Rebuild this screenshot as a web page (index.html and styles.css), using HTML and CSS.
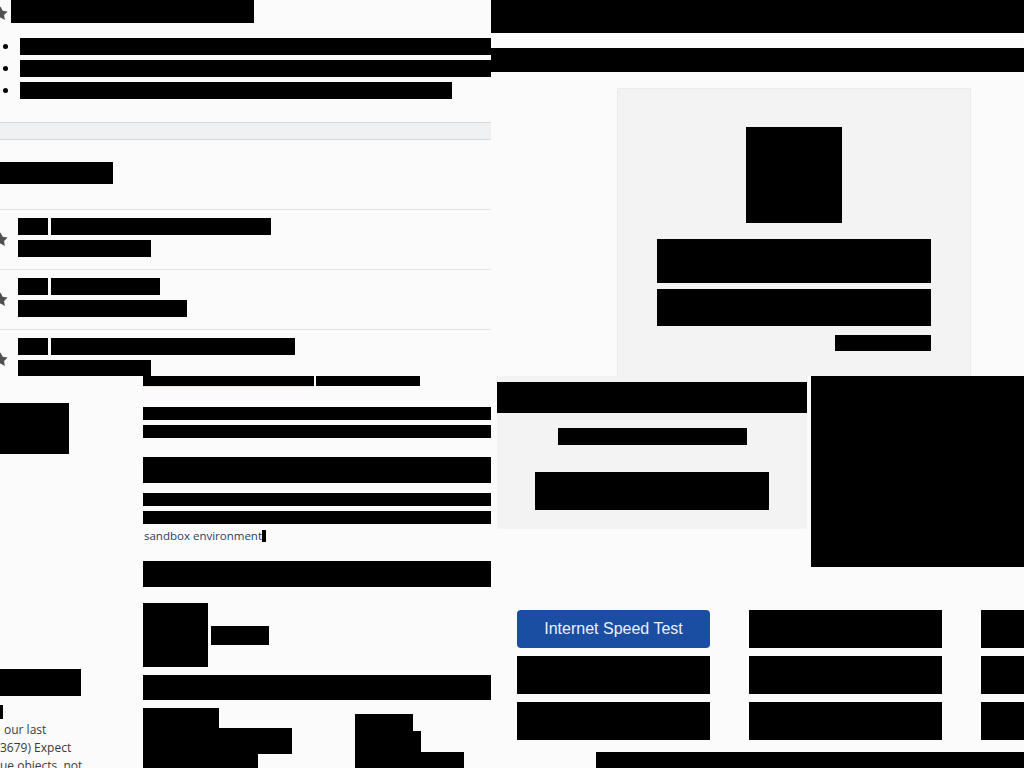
FILE: index.html
```html
<!DOCTYPE html>
<html lang="en">
<head>
<meta charset="utf-8">
<title>Page</title>
<link rel="stylesheet" href="styles.css">
</head>
<body>
<div class="page">
  <section class="lt">
    <div class="title-row">
      <svg class="star" viewBox="0 0 24 24"><path d="M12 2l3.09 6.26L22 9.27l-5 4.87 1.18 6.88L12 17.77l-6.18 3.25L7 14.14 2 9.27l6.91-1.01z"/></svg>
      <span class="x title"></span>
    </div>
    <ul class="bullets">
      <li><span class="x b1"></span></li>
      <li><span class="x b2"></span></li>
      <li><span class="x b3"></span></li>
    </ul>
    <div class="greybar"></div>
    <div class="x heading"></div>
    <div class="rows">
      <div class="row">
        <svg class="star" viewBox="0 0 24 24"><path d="M12 2l3.09 6.26L22 9.27l-5 4.87 1.18 6.88L12 17.77l-6.18 3.25L7 14.14 2 9.27l6.91-1.01z"/></svg>
        <div class="row-text">
          <div class="line1"><span class="x tag"></span><span class="x r1a"></span></div>
          <span class="x r1b"></span>
        </div>
      </div>
      <div class="row">
        <svg class="star" viewBox="0 0 24 24"><path d="M12 2l3.09 6.26L22 9.27l-5 4.87 1.18 6.88L12 17.77l-6.18 3.25L7 14.14 2 9.27l6.91-1.01z"/></svg>
        <div class="row-text">
          <div class="line1"><span class="x tag"></span><span class="x r2a"></span></div>
          <span class="x r2b"></span>
        </div>
      </div>
      <div class="row">
        <svg class="star" viewBox="0 0 24 24"><path d="M12 2l3.09 6.26L22 9.27l-5 4.87 1.18 6.88L12 17.77l-6.18 3.25L7 14.14 2 9.27l6.91-1.01z"/></svg>
        <div class="row-text">
          <div class="line1"><span class="x tag"></span><span class="x r3a"></span></div>
          <span class="x r3b"></span>
        </div>
      </div>
    </div>
  </section>

  <section class="rt">
    <div class="x topbar"></div>
    <div class="x subbar"></div>
    <div class="card">
      <div class="x avatar"></div>
      <div class="x cline1"></div>
      <div class="x cline2"></div>
      <div class="x cmeta"></div>
    </div>
  </section>

  <section class="lb">
    <aside class="side">
      <div class="x s1"></div>
      <div class="x s2"></div>
      <div class="x s3"></div>
      <div class="side-text">
        <div class="st1">our last</div>
        <div>3679) Expect</div>
        <div>ue objects, not</div>
      </div>
    </aside>
    <main class="main">
      <div class="crumbs"><span class="x c1"></span><span class="x c2"></span></div>
      <div class="x p1"></div>
      <div class="x p2"></div>
      <div class="x p3"></div>
      <div class="x p4"></div>
      <div class="x p5"></div>
      <p class="sandbox">sandbox environment<span class="x cursor"></span></p>
      <div class="x p6"></div>
      <div class="media"><div class="x thumb"></div><div class="x label"></div></div>
      <div class="x p7"></div>
      <div class="cols">
        <div class="col">
          <div class="x k1"></div>
          <div class="x k2"></div>
          <div class="x k3"></div>
        </div>
        <div class="col col-b">
          <div class="x m1"></div>
          <div class="x m2"></div>
          <div class="x m3"></div>
        </div>
      </div>
    </main>
  </section>

  <section class="rb">
    <div class="upper">
      <div class="promo">
        <div class="x promo-head"></div>
        <div class="x promo-sub"></div>
        <div class="x promo-btn"></div>
      </div>
      <div class="x ad"></div>
    </div>
    <div class="links">
      <a class="link-btn blue">Internet Speed Test</a>
      <span class="x link"></span>
      <span class="x link"></span>
      <span class="x link"></span>
      <span class="x link"></span>
      <span class="x link"></span>
      <span class="x link"></span>
      <span class="x link"></span>
      <span class="x link"></span>
    </div>
    <div class="x footer-bar"></div>
  </section>
</div>
</body>
</html>
```

FILE: styles.css
```css
* { box-sizing: border-box; }
html, body { margin: 0; padding: 0; }
body {
  background: #fbfbfb;
  font-family: "Open Sans", "DejaVu Sans", sans-serif;
  overflow: hidden;
}
.page {
  width: 1024px;
  height: 768px;
  display: grid;
  grid-template-columns: 491px 533px;
  grid-template-rows: 376px 392px;
  overflow: hidden;
}
.x { background: #000; display: block; }
span.x { display: inline-block; }

/* ---------- left top ---------- */
.lt { overflow: hidden; }
.star { width: 17px; height: 17px; fill: #505050; flex: none; }
.title-row { display: flex; align-items: center; height: 24px; margin-left: -8px; gap: 2px; }
.title-row .star { margin-top: 2px; }
.title { width: 243px; height: 23px; align-self: flex-start; }
.bullets { margin: 14px 0 0; padding: 0 0 0 20px; font-size: 14px; }
.bullets li { height: 22px; line-height: 17px; }
.bullets .x { height: 17px; vertical-align: top; }
.b1, .b2 { width: 471px; }
.b3 { width: 432px; }
.greybar {
  margin-top: 18px;
  height: 18px;
  background: #eff1f3;
  border-top: 1px solid #d6d9dc;
  border-bottom: 1px solid #d6d9dc;
}
.heading { margin-top: 22px; width: 113px; height: 22px; }
.rows { margin-top: 25px; }
.row {
  display: flex;
  align-items: center;
  gap: 9px;
  border-top: 1px solid #e3e3e3;
  padding: 8px 0 12px;
  margin-left: -8px;
}
.row .star { margin-top: 4px; }
.row-text { display: flex; flex-direction: column; gap: 5px; }
.line1 { display: flex; gap: 3px; }
.line1 .x, .row-text > .x { height: 17px; }
.tag { width: 30px; }
.r1a { width: 220px; }
.r1b { width: 133px; }
.r2a { width: 109px; }
.r2b { width: 169px; }
.r3a { width: 244px; }
.r3b { width: 133px; }

/* ---------- right top ---------- */
.rt { overflow: hidden; }
.topbar { height: 33px; }
.subbar { margin-top: 15px; height: 24px; }
.card {
  margin: 16px 0 0 126px;
  width: 354px;
  height: 300px;
  background: #f3f3f3;
  border: 1px solid #ececec;
  padding: 38px 39px 0;
  display: flex;
  flex-direction: column;
  align-items: center;
}
.avatar { width: 96px; height: 96px; }
.cline1 { margin-top: 16px; width: 274px; height: 44px; }
.cline2 { margin-top: 6px; width: 274px; height: 37px; }
.cmeta { margin-top: 9px; width: 96px; height: 16px; align-self: flex-end; }

/* ---------- left bottom ---------- */
.lb { display: grid; grid-template-columns: 143px 348px; overflow: hidden; }
.side { padding-top: 27px; overflow: hidden; }
.s1 { width: 69px; height: 51px; }
.s2 { margin-top: 215px; width: 81px; height: 27px; }
.s3 { margin-top: 9px; width: 3px; height: 14px; }
.side-text { margin-top: 2px; font-size: 12px; line-height: 18px; color: #3a3a3a; white-space: nowrap; }
.st1 { padding-left: 4px; }

.main { overflow: hidden; }
.crumbs { display: flex; gap: 2px; height: 10px; }
.c1 { width: 171px; height: 10px; box-shadow: 0 1px 0 #e9e3d3; }
.c2 { width: 104px; height: 10px; }
.p1 { margin-top: 21px; height: 13px; }
.p2 { margin-top: 5px; height: 13px; }
.p3 { margin-top: 19px; height: 26px; }
.p4 { margin-top: 10px; height: 13px; }
.p5 { margin-top: 5px; height: 13px; }
.sandbox {
  margin: 5px 0 0;
  height: 13px;
  font-size: 11.5px;
  line-height: 13px;
  color: #2a3d68;
  white-space: nowrap;
  padding-left: 1px;
  display: flex;
  align-items: center;
}
.cursor { width: 4px; height: 12px; }
.p6 { margin-top: 19px; height: 26px; }
.media { margin-top: 16px; display: flex; align-items: center; gap: 3px; }
.thumb { width: 65px; height: 64px; }
.label { width: 58px; height: 19px; }
.p7 { margin-top: 8px; height: 25px; }
.cols { margin-top: 8px; display: flex; gap: 63px; }
.k1 { width: 76px; height: 20px; }
.k2 { width: 149px; height: 26px; }
.k3 { width: 115px; height: 14px; }
.col-b { padding-top: 6px; }
.m1 { width: 58px; height: 17px; }
.m2 { width: 66px; height: 21px; }
.m3 { width: 109px; height: 17px; }

/* ---------- right bottom ---------- */
.rb { overflow: hidden; }
.upper { display: flex; gap: 4px; margin-left: 6px; align-items: flex-start; }
.promo {
  width: 310px;
  height: 153px;
  background: #f3f3f3;
  padding-top: 6px;
  display: flex;
  flex-direction: column;
  align-items: center;
}
.promo-head { width: 310px; height: 31px; }
.promo-sub { margin-top: 15px; width: 189px; height: 17px; }
.promo-btn { margin-top: 27px; width: 234px; height: 38px; }
.ad { width: 213px; height: 191px; flex: none; }
.links {
  margin: 43px 0 0 26px;
  display: grid;
  grid-template-columns: 193px 193px 193px;
  column-gap: 39px;
  row-gap: 8px;
}
.link-btn, .link { height: 38px; display: flex; }
.blue {
  background: #1a4ea3;
  border-radius: 4px;
  color: #eaf0fa;
  font-family: "Liberation Sans", Arial, sans-serif;
  font-size: 16px;
  align-items: center;
  justify-content: center;
}
.footer-bar { margin: 12px 0 0 105px; height: 16px; }
```
